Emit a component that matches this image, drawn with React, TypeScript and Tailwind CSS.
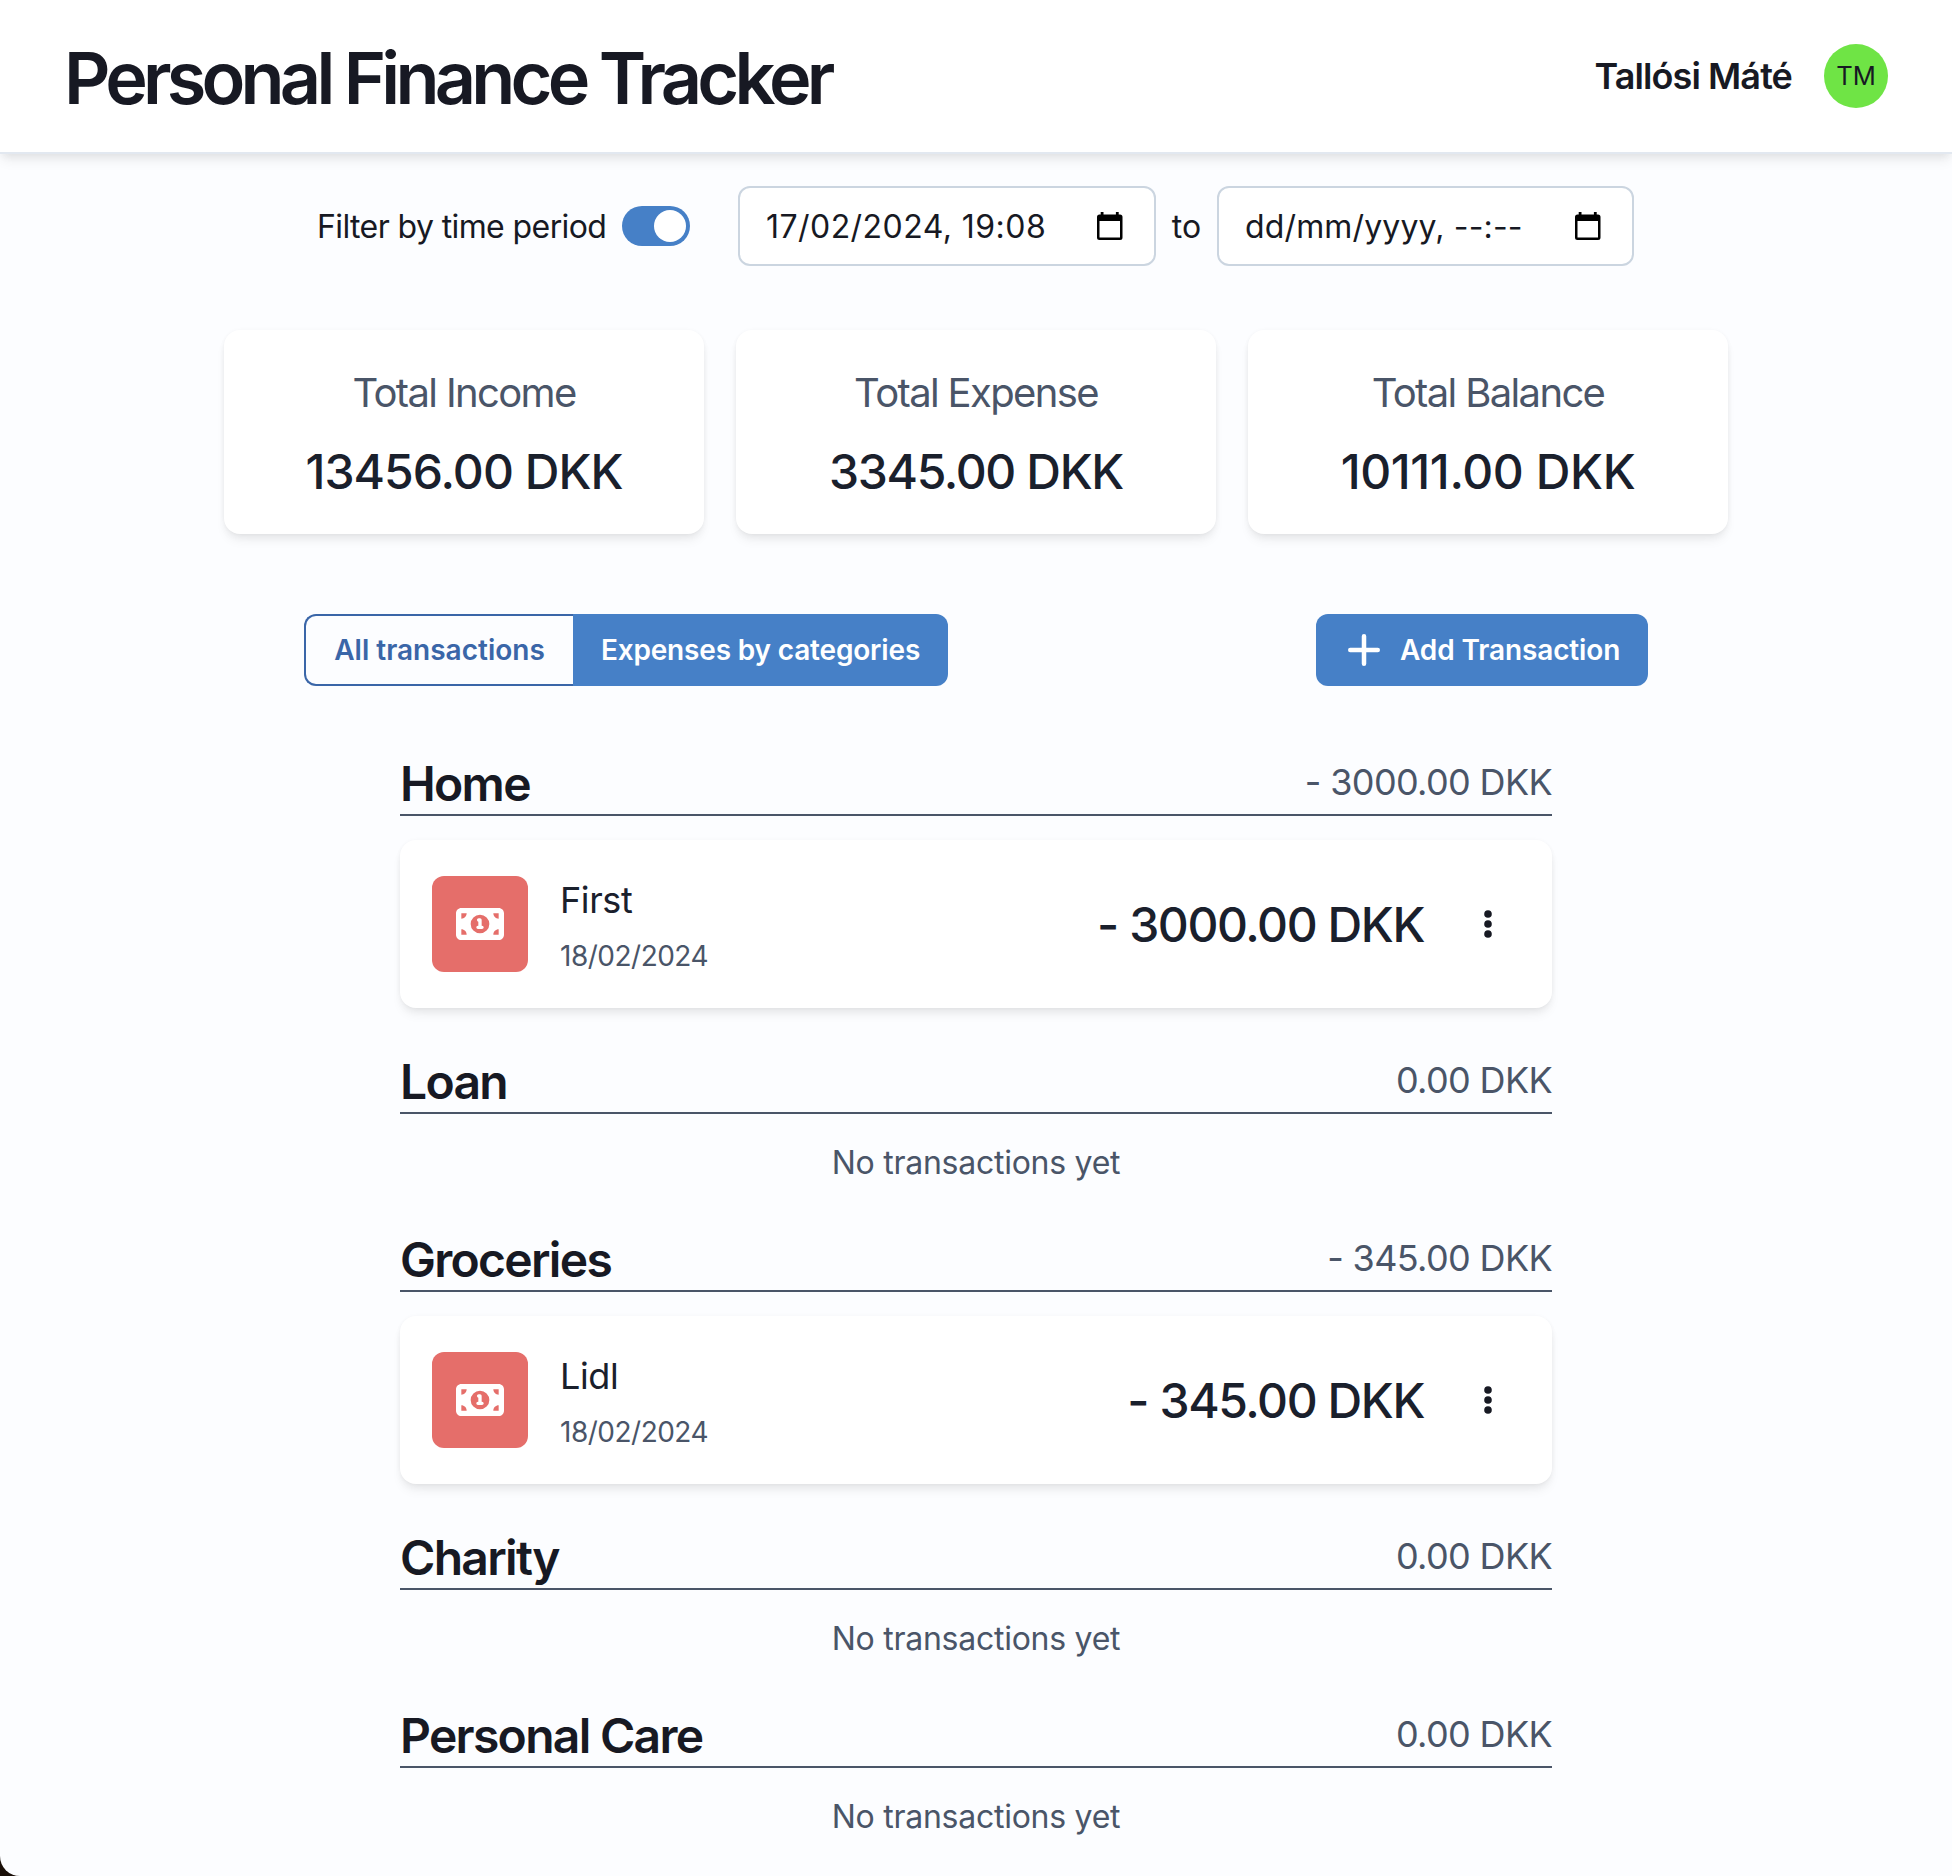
import React from "react";
import { FaMoneyBill1 } from "react-icons/fa6";

const shadow = "shadow-[0_8px_12px_-2px_rgba(0,0,0,0.06),0_4px_8px_-2px_rgba(0,0,0,0.06),0_0_4px_0_rgba(0,0,0,0.03)]";

function CalendarIcon() {
  return (
    <svg viewBox="0 0 26 28" className="h-7 w-[26px]" fill="#000">
      <rect x="3.700" y="0" width="2.800" height="4" />
      <rect x="18.900" y="0" width="2.800" height="4" />
      <path
        fillRule="evenodd"
        d="M2.500 2.500h20.500a2.500 2.500 0 0 1 2.500 2.500v20.500a2.500 2.500 0 0 1-2.500 2.500H2.500A2.500 2.500 0 0 1 0 25.500V5a2.500 2.500 0 0 1 2.500-2.500zM2.500 9v16.500h20.500V9z"
      />
    </svg>
  );
}

function DateInput({ value, width, spacing }: { value: string; width: string; spacing: string }) {
  return (
    <div className={"flex h-20 items-center justify-between rounded-xl border-2 border-[#cbd5e0] bg-white pl-[26px] pr-[31px] " + width}>
      <span className={"whitespace-nowrap pt-[2px] text-[32px] " + spacing}>{value}</span>
      <CalendarIcon />
    </div>
  );
}

function Stat({ label, value, spacing }: { label: string; value: string; spacing: string }) {
  return (
    <div className={"flex h-[204px] w-[480px] flex-col items-center rounded-2xl bg-white pt-[33px] " + shadow}>
      <div className="whitespace-nowrap text-[40px] leading-[60px] tracking-[-1.640px] text-[#4a5568]">{label}</div>
      <div className={"mt-[17px] whitespace-nowrap text-[48px] leading-[64px] font-medium text-[#1a202c] " + spacing}>{value}</div>
    </div>
  );
}

function Category({ name, total, children }: { name: string; total: string; children: React.ReactNode }) {
  return (
    <section>
      <div className="flex h-[66px] items-start justify-between border-b-2 border-[#4a5568]">
        <h2 className="text-[48px] leading-[68px] font-semibold tracking-[-1.700px]">{name}</h2>
        <span className="text-[36px] leading-[64px] tracking-[-0.640px] text-[#4a5568]">{total}</span>
      </div>
      {children}
    </section>
  );
}

function Transaction({ name, amount }: { name: string; amount: string }) {
  return (
    <div className={"mt-6 mb-10 flex h-[168px] items-center rounded-2xl bg-white pl-8 pr-[58px] " + shadow}>
      <div className="flex size-24 items-center justify-center rounded-xl bg-[#e56e6a] text-white">
        <FaMoneyBill1 className="size-12" />
      </div>
      <div className="ml-8 flex-1 pt-[2px]">
        <div className="text-[36px] leading-[54px] tracking-[-0.400px] text-[#1a202c]">{name}</div>
        <div className="mt-[8px] text-[28px] leading-[42px] tracking-[-0.500px] text-[#4a5568]">{"18/02/2024"}</div>
      </div>
      <div className="pt-[2px] text-[48px] font-medium tracking-[-1.420px] text-[#1a202c]">{amount}</div>
      <svg viewBox="0 0 12 32" className="ml-[58px] h-8 w-3" fill="#171923">
        <circle cx="6" cy="6" r="3.800" />
        <circle cx="6" cy="16" r="3.800" />
        <circle cx="6" cy="26" r="3.800" />
      </svg>
    </div>
  );
}

function Empty() {
  return <div className="mt-[25px] mb-[39px] text-center text-[32px] leading-[48px] tracking-[-0.260px] text-[#4a5568]">No transactions yet</div>;
}

export default function App() {
  return (
    <div className="h-[1876px] overflow-hidden bg-[#1a0f08]">
      <div className="h-full overflow-hidden rounded-bl-[20px] bg-[#fcfdff] font-['Inter',sans-serif] text-[#171923] [font-feature-settings:'calt'_0]">
        <header className="flex h-[154px] items-center justify-between border-b-2 border-[#e2e8f0] bg-white px-16 shadow-[0_8px_12px_-2px_rgba(0,0,0,0.07),0_4px_8px_-2px_rgba(0,0,0,0.06)]">
          <h1 className="pt-[3px] text-[72px] font-semibold tracking-[-4.780px]">Personal Finance Tracker</h1>
          <div className="flex items-center gap-8">
            <span className="text-[36px] font-semibold tracking-[-0.900px]">Tallósi Máté</span>
            <div className="flex size-16 items-center justify-center rounded-full bg-[#6fe445] text-[25.600px]">TM</div>
          </div>
        </header>
        <div className="mt-[32px] flex items-center pl-[317px]">
          <span className="w-[289px] whitespace-nowrap pt-[2px] text-[32px] tracking-[-0.600px]">Filter by time period</span>
          <div className="ml-4 flex h-10 w-[68px] justify-end rounded-full bg-[#4680c7] p-1">
            <div className="size-8 rounded-full bg-white" />
          </div>
          <div className="ml-12">
            <DateInput value="17/02/2024, 19:08" width="w-[418px]" spacing="tracking-[0.450px]" />
          </div>
          <span className="w-[61px] pt-[2px] text-center text-[32px]">to</span>
          <DateInput value="dd/mm/yyyy, --:--" width="w-[417px]" spacing="tracking-[0.150px]" />
        </div>
        <div className="mt-16 flex justify-center gap-8">
          <Stat label="Total Income" value="13456.00 DKK" spacing="tracking-[-0.950px]" />
          <Stat label="Total Expense" value="3345.00 DKK" spacing="tracking-[-1.360px]" />
          <Stat label="Total Balance" value="10111.00 DKK" spacing="tracking-[-0.400px]" />
        </div>
        <div className="mx-[304px] mt-20 flex h-[72px] justify-between text-[28px] font-semibold">
          <div className="flex">
            <button className="w-[269px] rounded-l-xl border-2 border-r-0 border-[#3a66a8] text-[#3a66a8]">All transactions</button>
            <button className="w-[375px] rounded-r-xl bg-[#4680c7] tracking-[-0.170px] text-white">Expenses by categories</button>
          </div>
          <button className="flex w-[332px] items-center rounded-xl bg-[#4680c7] pl-8 text-white">
            <svg viewBox="0 0 32 32" className="size-8" stroke="#fff" strokeWidth="4.500" strokeLinecap="round">
              <path d="M16 2.250V29.750M2.250 16H29.750" />
            </svg>
            <span className="ml-5 tracking-[-0.120px]">Add Transaction</span>
          </button>
        </div>
        <main className="mx-[400px] mt-[64px]">
          <Category name="Home" total="- 3000.00 DKK"><Transaction name="First" amount="- 3000.00 DKK" /></Category>
          <Category name="Loan" total="0.00 DKK"><Empty /></Category>
          <Category name="Groceries" total="- 345.00 DKK"><Transaction name="Lidl" amount="- 345.00 DKK" /></Category>
          <Category name="Charity" total="0.00 DKK"><Empty /></Category>
          <Category name="Personal Care" total="0.00 DKK"><Empty /></Category>
        </main>
      </div>
    </div>
  );
}
